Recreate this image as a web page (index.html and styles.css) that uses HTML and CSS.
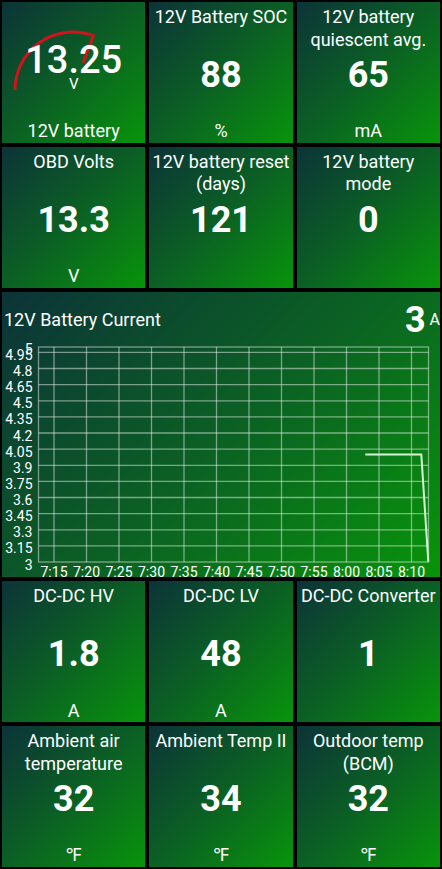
FILE: index.html
```html
<!DOCTYPE html>
<html lang="en">
<head>
    <meta charset="UTF-8">
    <title>Dashboard</title>
    <link rel="stylesheet" href="styles.css">
</head>
<body>

    <div class="dash">

        <!-- gauge tile -->
        <div class="tile">
            <svg class="gauge-arc" width="144" height="141" viewBox="0 0 144 141">
                <path d="M13 88 A58 58 0 0 1 91.4 33.7 L81.2 60.9" fill="none" stroke="#d0141c" stroke-width="3"/>
            </svg>
            <div class="gauge">
                <div class="gauge-num">13.25</div>
                <div class="gauge-unit">V</div>
            </div>
            <div class="unit">12V battery</div>
        </div>

        <div class="tile">
            <div class="title">12V Battery SOC</div>
            <div class="value">88</div>
            <div class="unit">%</div>
        </div>

        <div class="tile">
            <div class="title">12V battery quiescent avg.</div>
            <div class="value">65</div>
            <div class="unit">mA</div>
        </div>

        <div class="tile">
            <div class="title">OBD Volts</div>
            <div class="value">13.3</div>
            <div class="unit">V</div>
        </div>

        <div class="tile">
            <div class="title">12V battery reset (days)</div>
            <div class="value">121</div>
            <div class="unit"></div>
        </div>

        <div class="tile">
            <div class="title">12V battery mode</div>
            <div class="value">0</div>
            <div class="unit"></div>
        </div>

        <!-- chart -->
        <div class="tile chart">
            <div class="chart-head">
                <span class="chart-title">12V Battery Current</span>
                <span class="chart-val">3<small>A</small></span>
            </div>
            <svg class="plot" width="438" height="238" viewBox="0 48 438 238">
                <g class="grid">
                    <rect x="36.5" y="55" width="390" height="215" fill="none"/>
                    <line x1="36.5" x2="426.5" y1="60.4" y2="60.4"/>
                    <line x1="36.5" x2="426.5" y1="76.5" y2="76.5"/>
                    <line x1="36.5" x2="426.5" y1="92.6" y2="92.6"/>
                    <line x1="36.5" x2="426.5" y1="108.8" y2="108.8"/>
                    <line x1="36.5" x2="426.5" y1="124.9" y2="124.9"/>
                    <line x1="36.5" x2="426.5" y1="141" y2="141"/>
                    <line x1="36.5" x2="426.5" y1="157.1" y2="157.1"/>
                    <line x1="36.5" x2="426.5" y1="173.3" y2="173.3"/>
                    <line x1="36.5" x2="426.5" y1="189.4" y2="189.4"/>
                    <line x1="36.5" x2="426.5" y1="205.5" y2="205.5"/>
                    <line x1="36.5" x2="426.5" y1="221.6" y2="221.6"/>
                    <line x1="36.5" x2="426.5" y1="237.8" y2="237.8"/>
                    <line x1="36.5" x2="426.5" y1="253.9" y2="253.9"/>
                    <line y1="55" y2="270" x1="52" x2="52"/>
                    <line y1="55" y2="270" x1="84.5" x2="84.5"/>
                    <line y1="55" y2="270" x1="117" x2="117"/>
                    <line y1="55" y2="270" x1="149.5" x2="149.5"/>
                    <line y1="55" y2="270" x1="182" x2="182"/>
                    <line y1="55" y2="270" x1="214.5" x2="214.5"/>
                    <line y1="55" y2="270" x1="247" x2="247"/>
                    <line y1="55" y2="270" x1="279.5" x2="279.5"/>
                    <line y1="55" y2="270" x1="312" x2="312"/>
                    <line y1="55" y2="270" x1="344.5" x2="344.5"/>
                    <line y1="55" y2="270" x1="377" x2="377"/>
                    <line y1="55" y2="270" x1="409.5" x2="409.5"/>
                </g>
                <g class="ylabels">
                    <text x="30.5" y="62">5</text>
                    <text x="30.5" y="67.9">4.95</text>
                    <text x="30.5" y="84">4.8</text>
                    <text x="30.5" y="100.1">4.65</text>
                    <text x="30.5" y="116.3">4.5</text>
                    <text x="30.5" y="132.4">4.35</text>
                    <text x="30.5" y="148.5">4.2</text>
                    <text x="30.5" y="164.6">4.05</text>
                    <text x="30.5" y="180.8">3.9</text>
                    <text x="30.5" y="196.9">3.75</text>
                    <text x="30.5" y="213">3.6</text>
                    <text x="30.5" y="229.1">3.45</text>
                    <text x="30.5" y="245.3">3.3</text>
                    <text x="30.5" y="261.4">3.15</text>
                    <text x="30.5" y="277.5">3</text>
                </g>
                <g class="xlabels">
                    <text x="52" y="284.5">7:15</text>
                    <text x="84.5" y="284.5">7:20</text>
                    <text x="117" y="284.5">7:25</text>
                    <text x="149.5" y="284.5">7:30</text>
                    <text x="182" y="284.5">7:35</text>
                    <text x="214.5" y="284.5">7:40</text>
                    <text x="247" y="284.5">7:45</text>
                    <text x="279.5" y="284.5">7:50</text>
                    <text x="312" y="284.5">7:55</text>
                    <text x="344.5" y="284.5">8:00</text>
                    <text x="377" y="284.5">8:05</text>
                    <text x="409.5" y="284.5">8:10</text>
                </g>
                <polyline class="series" points="363.3,162.5 419.3,162.5 426.3,269.7"/>
            </svg>
        </div>

        <div class="tile">
            <div class="title">DC-DC HV</div>
            <div class="value">1.8</div>
            <div class="unit">A</div>
        </div>

        <div class="tile">
            <div class="title">DC-DC LV</div>
            <div class="value">48</div>
            <div class="unit">A</div>
        </div>

        <div class="tile">
            <div class="title">DC-DC Converter</div>
            <div class="value">1</div>
            <div class="unit"></div>
        </div>

        <div class="tile">
            <div class="title">Ambient air temperature</div>
            <div class="value">32</div>
            <div class="unit">℉</div>
        </div>

        <div class="tile">
            <div class="title">Ambient Temp II</div>
            <div class="value">34</div>
            <div class="unit">℉</div>
        </div>

        <div class="tile">
            <div class="title">Outdoor temp (BCM)</div>
            <div class="value">32</div>
            <div class="unit">℉</div>
        </div>

    </div>

</body>
</html>
```

FILE: styles.css
```css
* {
    box-sizing: border-box;
    margin: 0;
    padding: 0;
}

body {
    background: #000;
    font-family: Roboto, 'Noto Sans', sans-serif;
    color: #fff;
}

.dash {
    display: grid;
    grid-template-columns: repeat(3, 1fr);
    grid-template-rows: repeat(6, 1fr);
    gap: 4px;
    padding: 2px;
    width: 442px;
    height: 869px;
}

.tile {
    position: relative;
    display: grid;
    grid-template: 1fr / 1fr;
    text-align: center;
    overflow: hidden;
    background: linear-gradient(135deg, #0c3338 0%, #0b6024 50%, #08940a 100%);
}

.tile > * {
    grid-area: 1 / 1;
}

.title {
    align-self: start;
    padding: 4px 1px 0;
    font-size: 18px;
    line-height: 22.5px;
}

.value {
    align-self: center;
    margin-top: 5px;
    font-size: 36px;
    font-weight: bold;
    line-height: 40px;
}

.unit {
    align-self: end;
    padding-bottom: 0;
    font-size: 18px;
    line-height: 22.5px;
}

/* gauge */
.gauge-arc {
    position: absolute;
    top: 0;
    left: 0;
}

.gauge {
    position: relative;
    align-self: start;
    padding-top: 40px;
}

.gauge-num {
    font-size: 38px;
    font-weight: 500;
    line-height: 36px;
}

.gauge-unit {
    font-size: 15px;
    line-height: 14px;
    margin-top: -1px;
}

/* chart */
.chart {
    grid-column: 1 / -1;
    grid-row: span 2;
    display: flex;
    flex-direction: column;
    text-align: left;
    overflow: visible;
}

.chart-head {
    display: flex;
    justify-content: space-between;
    align-items: center;
    height: 48px;
    padding: 8px 0 0 2px;
}

.chart-title {
    font-size: 18px;
}

.chart-val {
    display: flex;
    align-items: center;
    gap: 4px;
    font-size: 36px;
    font-weight: bold;
    line-height: 40px;
}

.chart-val small {
    font-size: 16px;
    font-weight: normal;
}

.plot {
    display: block;
    flex: none;
    overflow: visible;
}

.grid rect,
.grid line {
    stroke: rgba(235, 240, 235, 0.5);
    stroke-width: 1.3;
}

.ylabels text,
.xlabels text {
    fill: #fff;
    font-family: Roboto, sans-serif;
    font-size: 14px;
}

.ylabels text {
    text-anchor: end;
}

.xlabels text {
    text-anchor: middle;
}

.series {
    fill: none;
    stroke: #d6f6d6;
    stroke-width: 2;
}
```
